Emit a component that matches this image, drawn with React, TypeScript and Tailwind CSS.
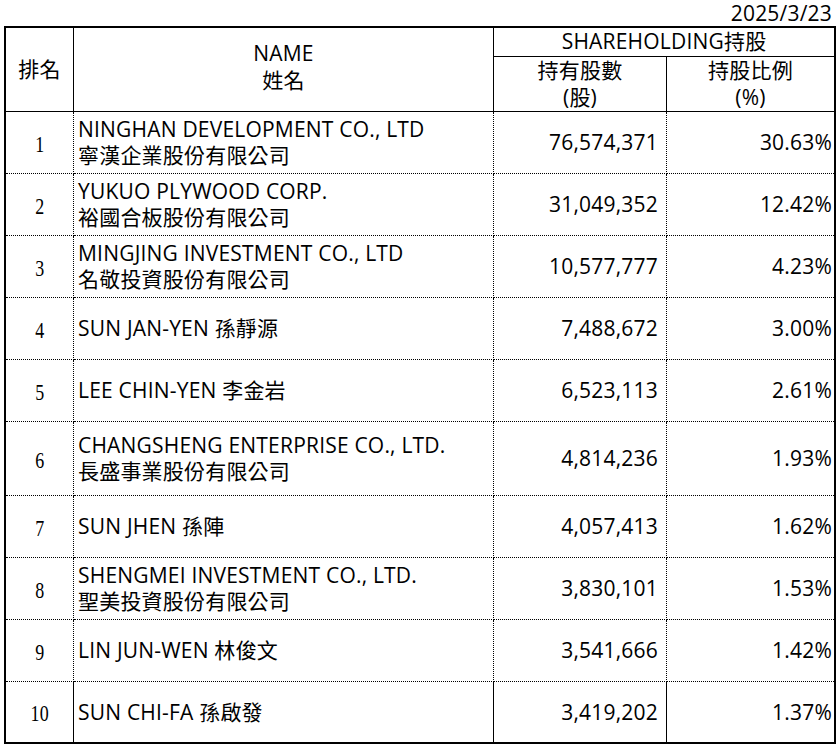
const rows = [
  { rank: '1', en: 'NINGHAN DEVELOPMENT CO., LTD', zh: '寧漢企業股份有限公司', shares: '76,574,371', pct: '30.63%' },
  { rank: '2', en: 'YUKUO PLYWOOD CORP.', zh: '裕國合板股份有限公司', shares: '31,049,352', pct: '12.42%' },
  { rank: '3', en: 'MINGJING INVESTMENT CO., LTD', zh: '名敬投資股份有限公司', shares: '10,577,777', pct: '4.23%' },
  { rank: '4', en: 'SUN JAN-YEN 孫靜源', zh: '', shares: '7,488,672', pct: '3.00%' },
  { rank: '5', en: 'LEE CHIN-YEN 李金岩', zh: '', shares: '6,523,113', pct: '2.61%' },
  { rank: '6', en: 'CHANGSHENG ENTERPRISE CO., LTD.', zh: '長盛事業股份有限公司', shares: '4,814,236', pct: '1.93%', tall: true },
  { rank: '7', en: 'SUN JHEN 孫陣', zh: '', shares: '4,057,413', pct: '1.62%' },
  { rank: '8', en: 'SHENGMEI INVESTMENT CO., LTD.', zh: '聖美投資股份有限公司', shares: '3,830,101', pct: '1.53%' },
  { rank: '9', en: 'LIN JUN-WEN 林俊文', zh: '', shares: '3,541,666', pct: '1.42%' },
  { rank: '10', en: 'SUN CHI-FA 孫啟發', zh: '', shares: '3,419,202', pct: '1.37%' },
];

export default function App() {
  return (
    <div
      className="w-[838px] h-[745px] bg-white text-black text-[21px] leading-[25px] tracking-[0.2px]"
      style={{ fontFamily: '"Open Sans", "Noto Sans CJK TC", sans-serif' }}
    >
      <div className="h-[26px] pr-[6px] text-right leading-[26px]">2025/3/23</div>
      <div className="ml-[4px] w-[832px] border-2 border-black">
        <table className="w-[828px] table-fixed border-separate border-spacing-0">
          <colgroup>
            <col className="w-[68px]" />
            <col className="w-[420px]" />
            <col className="w-[173px]" />
            <col className="w-[167px]" />
          </colgroup>
          <thead>
            <tr>
              <th rowSpan={2} className="border-r border-b border-black font-normal text-center">
                排名
              </th>
              <th rowSpan={2} className="border-r border-b border-black font-normal text-center pb-[5px] leading-[27px]">
                <div>NAME</div>
                <div>姓名</div>
              </th>
              <th colSpan={2} className="h-[29px] border-b border-black font-normal text-center leading-[26px] pb-[2px]">
                SHAREHOLDING持股
              </th>
            </tr>
            <tr>
              <th className="h-[54px] border-r border-b border-black font-normal text-center leading-[27px]">
                <div>持有股數</div>
                <div>(股)</div>
              </th>
              <th className="h-[54px] border-b border-black font-normal text-center leading-[27px]">
                <div>持股比例</div>
                <div>(%)</div>
              </th>
            </tr>
          </thead>
          <tbody>
            {rows.map((r, i) => {
              const last = i === rows.length - 1;
              const rowBorder = last ? '' : 'border-b border-dotted border-b-black';
              const h = r.tall ? 'h-[74px]' : last ? 'h-[60px]' : 'h-[62px]';
              return (
                <tr key={r.rank}>
                  <td className={`${h} ${rowBorder} border-r border-r-black text-center`}>
                    <span
                      className="inline-block scale-x-[0.78] text-[23px] pt-[3px]"
                      style={{ fontFamily: '"Liberation Serif", serif' }}
                    >
                      {r.rank}
                    </span>
                  </td>
                  <td className={`${h} ${rowBorder} border-r border-r-black pl-[4px] whitespace-nowrap`}>
                    <div>{r.en}</div>
                    {r.zh && <div className="mt-[1px]">{r.zh}</div>}
                  </td>
                  <td className={`${h} ${rowBorder} border-r border-r-black pr-[8px] text-right`}>
                    {r.shares}
                  </td>
                  <td className={`${h} ${rowBorder} pr-[2px] text-right`}>{r.pct}</td>
                </tr>
              );
            })}
          </tbody>
        </table>
      </div>
    </div>
  );
}
